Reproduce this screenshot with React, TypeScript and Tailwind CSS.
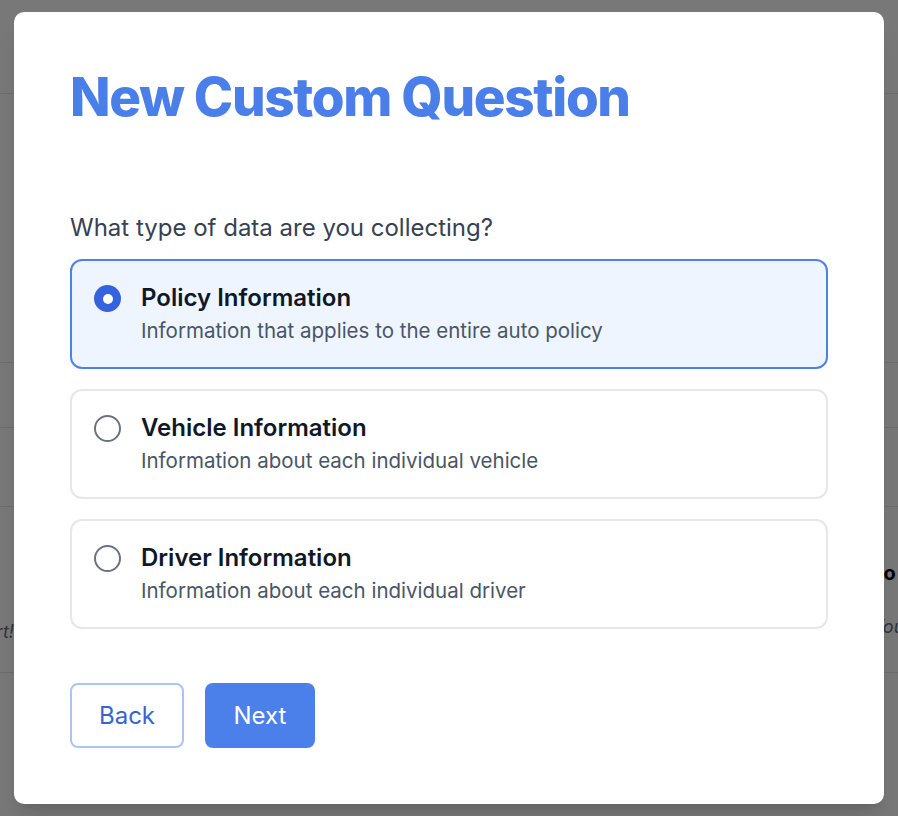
import React, { useState } from 'react';

const options = [
  { id: 'policy', title: 'Policy Information', desc: 'Information that applies to the entire auto policy' },
  { id: 'vehicle', title: 'Vehicle Information', desc: 'Information about each individual vehicle' },
  { id: 'driver', title: 'Driver Information', desc: 'Information about each individual driver' },
];

export default function App() {
  const [selected, setSelected] = useState('policy');

  return (
    <div className="relative h-[816px] overflow-hidden bg-white font-[Inter,sans-serif]">
      {/* Page behind the dialog */}
      <div className="flex flex-col">
        <div className="h-[94px] border-b border-gray-200" />
        <div className="h-[269px] border-b border-gray-200" />
        <div className="h-[65px] border-b border-gray-200" />
        <div className="h-[79px] border-b border-gray-200" />
        <div className="h-[166px] border-b border-gray-200 flex justify-between">
          <div className="w-[14px] overflow-hidden flex justify-end pt-[111px]">
            <span className="whitespace-nowrap italic text-[18px] text-gray-500">Great start!</span>
          </div>
          <div className="w-[40px] overflow-hidden flex flex-col pt-[56px]">
            <span className="whitespace-nowrap font-bold text-[20px] text-black leading-none">Info</span>
            <span className="whitespace-nowrap italic text-[18px] text-gray-500 pl-[14px] mt-[30px]">You</span>
          </div>
        </div>
        <div className="h-[143px]" />
      </div>

      {/* Overlay */}
      <div className="absolute inset-0 bg-black/[0.53] flex justify-center pt-3">
        <div className="w-[870px] h-[792px] bg-white rounded-[10px] shadow-xl p-14">
          <h1 className="mt-[3px] text-[53px] leading-none font-extrabold text-[#4a7fe9] tracking-tight">New Custom Question</h1>

          <p className="mt-[89px] text-[24px] leading-[30px] text-gray-700">What type of data are you collecting?</p>

          <div className="mt-[16px] flex flex-col gap-[20px]">
            {options.map((o) => {
              const active = selected === o.id;
              return (
                <button
                  key={o.id}
                  type="button"
                  onClick={() => setSelected(o.id)}
                  className={`flex items-start gap-5 text-left h-[110px] rounded-xl border-2 px-[22px] pt-[21px] ${
                    active ? 'border-[#4f80e6] bg-[#eef5ff]' : 'border-gray-200 bg-white'
                  }`}
                >
                  <span
                    className={`mt-[3px] w-[27px] h-[27px] shrink-0 rounded-full flex items-center justify-center ${
                      active ? 'bg-[#3563e0]' : 'border-2 border-gray-500 bg-white'
                    }`}
                  >
                    {active && <span className="w-[10px] h-[10px] rounded-full bg-white" />}
                  </span>
                  <span className="flex flex-col">
                    <span className="text-[24px] font-semibold text-gray-900 leading-[32px]">{o.title}</span>
                    <span className="text-[20.5px] text-gray-600 leading-[34px]">{o.desc}</span>
                  </span>
                </button>
              );
            })}
          </div>

          <div className="mt-[54px] flex gap-[21px]">
            <button className="w-[114px] h-[65px] rounded-lg border-2 border-[#a9c6f2] text-[#3a62d2] text-[24px]">Back</button>
            <button className="w-[110px] h-[65px] rounded-lg bg-[#4b7fe9] text-white text-[24px]">Next</button>
          </div>
        </div>
      </div>
    </div>
  );
}
